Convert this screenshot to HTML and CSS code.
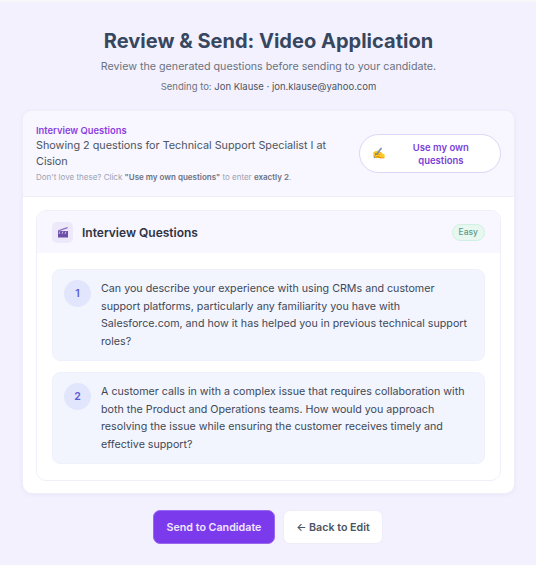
FILE: index.html
```html
<!DOCTYPE html>
<html lang="en">
<head>
    <meta charset="UTF-8">
    <meta name="viewport" content="width=device-width, initial-scale=1.0">
    <title>Review &amp; Send: Video Application</title>
    <link rel="stylesheet" href="styles.css">
</head>
<body>
    <div class="page">
        <header class="page-head">
            <h1>Review &amp; Send: Video Application</h1>
            <p class="subtitle">Review the generated questions before sending to your candidate.</p>
            <p class="sending">Sending to: <span class="recipient">Jon Klause · jon.klause@yahoo.com</span></p>
        </header>

        <div class="card">
            <div class="banner">
                <div class="banner-text">
                    <div class="eyebrow">Interview Questions</div>
                    <div class="showing">Showing 2 questions for Technical Support Specialist I at Cision</div>
                    <div class="hint">Don't love these? Click <b>"Use my own questions"</b> to enter <b>exactly 2</b>.</div>
                </div>
                <button class="own-btn" type="button">
                    <span class="own-icon">✍️</span>
                    <span class="own-label">Use my own questions</span>
                </button>
            </div>

            <div class="card-body">
                <section class="panel">
                    <div class="panel-head">
                        <span class="panel-icon">
                            <svg width="12" height="12" viewBox="0 0 12 12">
                                <path d="M1 5h10v6.5H1z" fill="#6d4fa8"/>
                                <path d="M1 4.2 10.4 1l.4 1.2L1.4 5.4z" fill="#8a6cc4"/>
                                <path d="M3 5.5 2 8M6 5.5 5 8M9 5.5 8 8" stroke="#c9b8ea" stroke-width="1" fill="none"/>
                            </svg>
                        </span>
                        <h2>Interview Questions</h2>
                        <span class="badge">Easy</span>
                    </div>
                    <div class="questions">
                        <div class="question">
                            <span class="num">1</span>
                            <p>Can you describe your experience with using CRMs and customer support platforms, particularly any familiarity you have with Salesforce.com, and how it has helped you in previous technical support roles?</p>
                        </div>
                        <div class="question">
                            <span class="num">2</span>
                            <p>A customer calls in with a complex issue that requires collaboration with both the Product and Operations teams. How would you approach resolving the issue while ensuring the customer receives timely and effective support?</p>
                        </div>
                    </div>
                </section>
            </div>
        </div>

        <div class="actions">
            <button class="send-btn" type="button">Send to Candidate</button>
            <button class="back-btn" type="button">← Back to Edit</button>
        </div>
    </div>
</body>
</html>
```

FILE: styles.css
```css
* {
    box-sizing: border-box;
}

body {
    margin: 0;
    height: 565px;
    overflow: hidden;
    font-family: Inter, "Liberation Sans", sans-serif;
    background-color: #f3f1fe;
    color: #374151;
}

.page {
    padding: 27px 21px 0 22px;
    border-top: 2px solid #f8f8fb;
}

.page-head {
    text-align: center;
}

h1 {
    margin: 0;
    font-size: 20.05px;
    line-height: 24px;
    font-weight: 700;
    color: #374760;
}

.subtitle {
    margin: 6px 0 0;
    font-size: 10.7px;
    line-height: 16px;
    color: #6b7280;
}

.sending {
    margin: 5px 0 0;
    font-size: 9.5px;
    line-height: 14px;
    color: #6b7280;
}

.recipient {
    color: #4b5563;
}

.card {
    margin-top: 16px;
    background-color: white;
    border: 1px solid #efedf8;
    border-radius: 10px;
    box-shadow: 0 1px 4px rgba(80,60,160,0.06);
    height: 384px;
    overflow: hidden;
}

.banner {
    display: flex;
    align-items: center;
    gap: 24px;
    height: 86px;
    padding: 0 13px;
    background-color: #f8f6ff;
    border-bottom: 1px solid #f1eff9;
}

.banner-text {
    flex: 1;
    min-width: 0;
    padding-top: 1px;
}

.eyebrow {
    font-size: 9.4px;
    line-height: 12px;
    font-weight: 600;
    color: #8b3fe0;
}

.showing {
    margin-top: 1px;
    font-size: 10.8px;
    line-height: 16px;
    color: #4b5563;
}

.hint {
    margin-top: 2px;
    font-size: 8px;
    line-height: 11px;
    color: #9ca3af;
    white-space: nowrap;
}

.hint b {
    color: #6b7280;
    font-weight: 600;
}

.own-btn {
    flex: none;
    display: flex;
    align-items: center;
    width: 142px;
    height: 39px;
    padding: 0 12px;
    background-color: white;
    border: 1px solid #ddd6f7;
    border-radius: 20px;
    font-family: inherit;
}

.own-icon {
    flex: none;
    font-size: 11px;
    font-family: "Noto Color Emoji", sans-serif;
}

.own-label {
    flex: 1;
    padding-left: 8px;
    font-size: 9.5px;
    line-height: 13px;
    font-weight: 600;
    color: #7c3fd6;
    text-align: center;
}

.card-body {
    padding: 13px;
}

.panel {
    border: 1px solid #f0eef8;
    border-radius: 10px;
    height: 271px;
    overflow: hidden;
}

.panel-head {
    display: flex;
    align-items: center;
    height: 42px;
    padding: 0 15px;
    background-color: #f8f6ff;
}

.panel-icon {
    display: flex;
    align-items: center;
    justify-content: center;
    width: 21px;
    height: 21px;
    margin-right: 9px;
    background-color: #ede9fb;
    border-radius: 5px;
}

h2 {
    flex: 1;
    margin: 0;
    font-size: 12px;
    font-weight: 600;
    color: #2f3442;
}

.badge {
    padding: 0 6px;
    height: 17px;
    line-height: 15px;
    font-size: 8.5px;
    font-weight: 500;
    color: #5f9a86;
    background-color: #e8f8f1;
    border: 1px solid #cdf1e2;
    border-radius: 9px;
}

.questions {
    display: flex;
    flex-direction: column;
    gap: 11px;
    padding: 16px 15px;
}

.question {
    display: flex;
    gap: 10px;
    height: 92px;
    padding: 10px 14px 0 11px;
    background-color: #f2f5fe;
    border: 1px solid #eef1fb;
    border-radius: 8px;
}

.num {
    flex: none;
    width: 27px;
    height: 27px;
    line-height: 27px;
    text-align: center;
    font-size: 10.5px;
    font-weight: 600;
    color: #5b5bd6;
    background-color: #e2e6fc;
    border-radius: 50%;
}

.question p {
    margin: 0;
    font-size: 10.7px;
    line-height: 17.6px;
    color: #3f4856;
}

.actions {
    display: flex;
    justify-content: center;
    gap: 8px;
    margin-top: 16px;
    padding-right: 1px;
}

.send-btn,
.back-btn {
    height: 34px;
    border-radius: 7px;
    font-family: inherit;
    font-size: 10.7px;
    font-weight: 600;
}

.send-btn {
    width: 122px;
    background-color: #7c3aed;
    color: #efe6fd;
    border: 1px solid #9a68f0;
}

.back-btn {
    width: 100px;
    background-color: white;
    color: #4b5563;
    border: 1px solid #efedf8;
}
```
